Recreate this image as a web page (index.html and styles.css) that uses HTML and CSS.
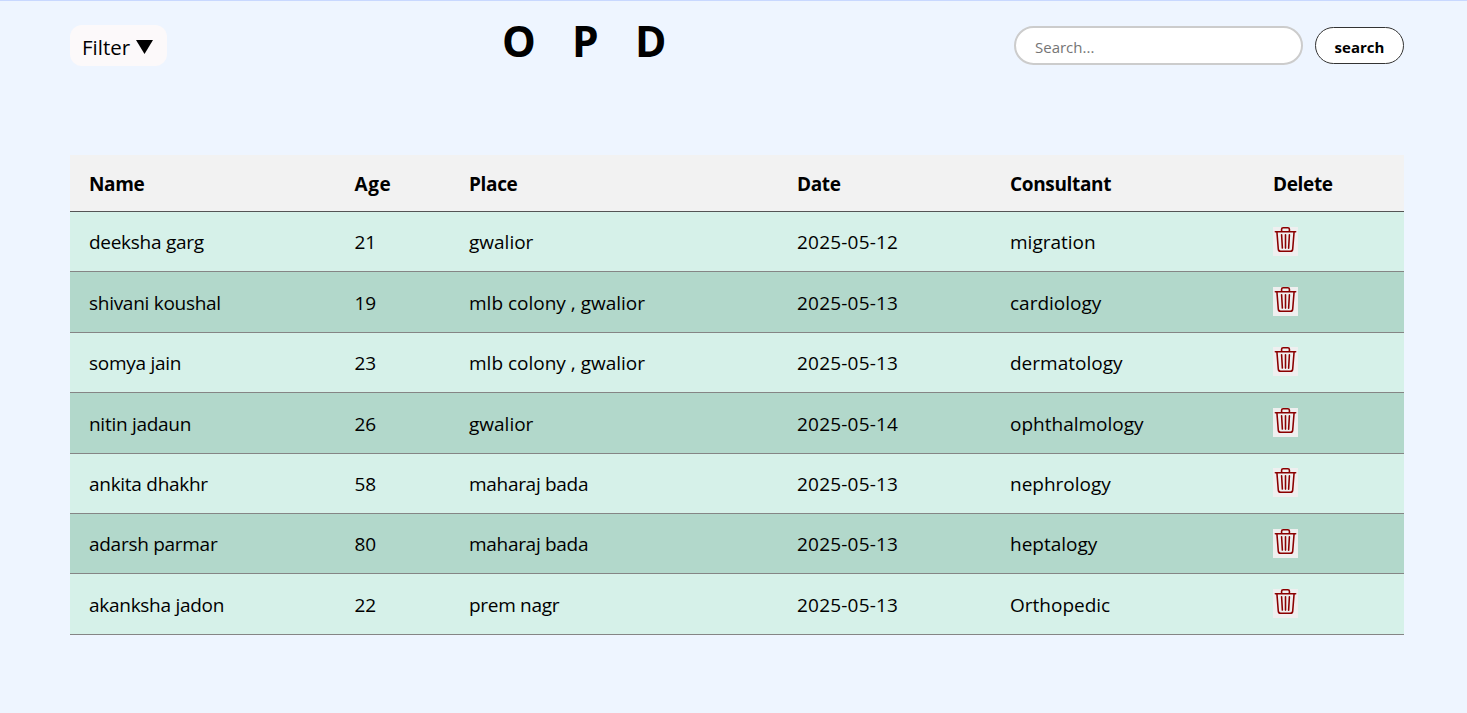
FILE: index.html
```html
<!DOCTYPE html>
<html lang="en">
<head>
<meta charset="utf-8">
<title>OPD</title>
<link rel="stylesheet" href="styles.css">
</head>
<body>
<svg class="sprite" aria-hidden="true">
  <symbol id="trash" viewBox="0 0 16 16"><path d="M6.5 1h3a.5.5 0 0 1 .5.5v1H6v-1a.5.5 0 0 1 .5-.5M11 2.5v-1A1.5 1.5 0 0 0 9.5 0h-3A1.5 1.5 0 0 0 5 1.5v1H1.5a.5.5 0 0 0 0 1h.538l.853 10.66A2 2 0 0 0 4.885 16h6.23a2 2 0 0 0 1.994-1.84l.853-10.66h.538a.5.5 0 0 0 0-1zm1.958 1-.846 10.58a1 1 0 0 1-.997.92h-6.23a1 1 0 0 1-.997-.92L3.042 3.5zm-7.487 1a.5.5 0 0 1 .528.47l.5 8.5a.5.5 0 0 1-.998.06L5 5.03a.5.5 0 0 1 .47-.53m5.058 0a.5.5 0 0 1 .47.53l-.5 8.5a.5.5 0 1 1-.998-.06l.5-8.5a.5.5 0 0 1 .528-.47M8 4.5a.5.5 0 0 1 .5.5v8.5a.5.5 0 0 1-1 0V5a.5.5 0 0 1 .5-.5"/></symbol>
</svg>
<header class="toolbar">
  <button class="filter"><span>Filter</span><svg class="caret" viewBox="0 0 17 14"><path d="M0 0h17L8.5 14z"/></svg></button>
  <h1 class="title"><span>O</span><span>P</span><span>D</span></h1>
  <form class="search">
    <input class="search-input" type="text" placeholder="Search...">
    <button class="search-button" type="button">search</button>
  </form>
</header>
<table class="records">
  <colgroup><col class="c-name"><col class="c-age"><col class="c-place"><col class="c-date"><col class="c-consultant"><col class="c-delete"></colgroup>
  <thead><tr><th>Name</th><th>Age</th><th>Place</th><th>Date</th><th>Consultant</th><th>Delete</th></tr></thead>
  <tbody>
    <tr><td>deeksha garg</td><td>21</td><td>gwalior</td><td>2025-05-12</td><td>migration</td><td><button class="delete" aria-label="Delete"><svg><use href="#trash"/></svg></button></td></tr>
    <tr><td>shivani koushal</td><td>19</td><td>mlb colony , gwalior</td><td>2025-05-13</td><td>cardiology</td><td><button class="delete" aria-label="Delete"><svg><use href="#trash"/></svg></button></td></tr>
    <tr><td>somya jain</td><td>23</td><td>mlb colony , gwalior</td><td>2025-05-13</td><td>dermatology</td><td><button class="delete" aria-label="Delete"><svg><use href="#trash"/></svg></button></td></tr>
    <tr><td>nitin jadaun</td><td>26</td><td>gwalior</td><td>2025-05-14</td><td>ophthalmology</td><td><button class="delete" aria-label="Delete"><svg><use href="#trash"/></svg></button></td></tr>
    <tr><td>ankita dhakhr</td><td>58</td><td class="snug">maharaj bada</td><td>2025-05-13</td><td>nephrology</td><td><button class="delete" aria-label="Delete"><svg><use href="#trash"/></svg></button></td></tr>
    <tr><td>adarsh parmar</td><td>80</td><td class="snug">maharaj bada</td><td>2025-05-13</td><td>heptalogy</td><td><button class="delete" aria-label="Delete"><svg><use href="#trash"/></svg></button></td></tr>
    <tr><td>akanksha jadon</td><td>22</td><td class="snug">prem nagr</td><td>2025-05-13</td><td>Orthopedic</td><td><button class="delete" aria-label="Delete"><svg><use href="#trash"/></svg></button></td></tr>
  </tbody>
</table>
</body>
</html>
```
FILE: styles.css
```css
* { box-sizing: border-box; }

body {
  margin: 0;
  height: 713px;
  overflow: hidden;
  padding: 0 63px 0 70px;
  border-top: 1px solid #c8d8ff;
  background: #eef5ff;
  color: #000;
  font-family: "Segoe UI", "Open Sans", sans-serif;
}

button, input { font-family: inherit; color: #000; }

.sprite { display: none; }

.toolbar {
  display: grid;
  grid-template-columns: 432px 1fr auto;
  align-items: start;
  height: 154px;
  padding-top: 24px;
}

.filter {
  display: flex;
  align-items: center;
  justify-self: start;
  gap: 6px;
  width: 97px;
  height: 41px;
  padding: 3px 0 0 12px;
  border: 0;
  border-radius: 12px;
  background: #fcf9fa;
  font-size: 20.5px;
}

.caret { width: 17px; height: 14px; }

.title {
  display: flex;
  margin: 0;
  font-size: 42.5px;
  line-height: 32px;
  font-weight: 700;
}

.title span:nth-child(1) { width: 70px; }
.title span:nth-child(2) { width: 63px; }

.search { display: flex; align-items: center; gap: 12px; padding-top: 1px; }

.search-input {
  width: 289px;
  height: 39px;
  padding: 3px 19px 0;
  border: 2px solid #ccc;
  border-radius: 20px;
  background: #fff;
  font-size: 15px;
}

.search-input::placeholder { color: #757575; }

.search-button {
  width: 89px;
  height: 37px;
  padding: 2px 0 0;
  border: 1px solid #333;
  border-radius: 19px;
  background: #fff;
  font-size: 15px;
  font-weight: 700;
}

.records {
  width: 100%;
  table-layout: fixed;
  border-collapse: separate;
  border-spacing: 0;
  font-size: 19px;
  text-align: left;
}

.c-name { width: 265.5px; }
.c-age { width: 114.5px; }
.c-place { width: 328px; }
.c-date { width: 213px; }
.c-consultant { width: 263px; }

.records th {
  height: 57px;
  padding: 2px 0 0 19px;
  border-bottom: 1px solid #555;
  background: #f2f2f2;
  letter-spacing: -0.35px;
}

.records th:nth-child(2) { letter-spacing: 0.6px; }

.records td {
  height: 60.4px;
  padding: 1.4px 0 0 19px;
  border-bottom: 1px solid #858585;
  background: #d6f1e9;
}

.records tbody tr:nth-child(even) td { background: #b2d8cb; }

.records td:first-child { letter-spacing: -0.28px; }
.records td:nth-child(4) { letter-spacing: 0.2px; }
.records .snug { letter-spacing: -0.3px; }

.records td:last-child { padding-top: 0; }

.delete {
  display: flex;
  align-items: flex-start;
  width: 25px;
  height: 29px;
  margin-top: -1px;
  padding: 0;
  border: 0;
  background: #efefef;
}

.delete svg { display: block; width: 25px; height: 25px; fill: #8b0000; }
```
